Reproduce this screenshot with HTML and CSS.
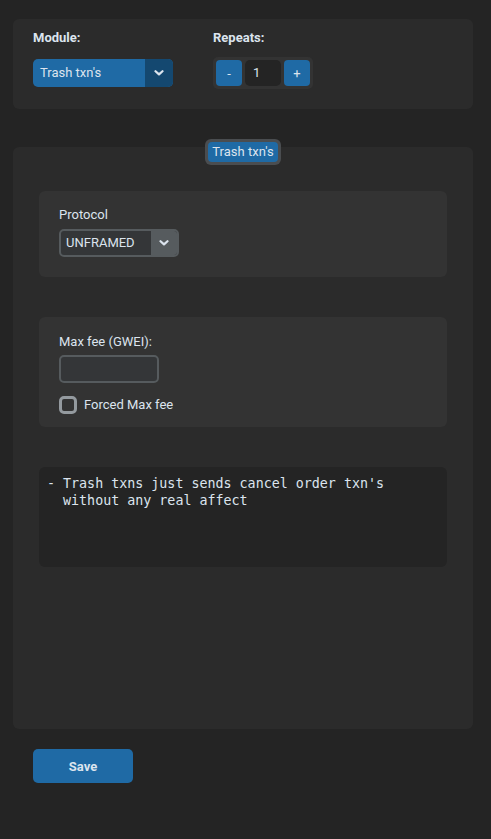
FILE: index.html
```html
<!DOCTYPE html>
<html>
<head>
<meta charset="utf-8">
<link rel="stylesheet" href="styles.css">
</head>
<body>
<div class="page">
  <section class="card top">
    <div class="field module">
      <div class="label bold">Module:</div>
      <div class="select blue">
        <span class="sel-text">Trash txn's</span>
        <span class="sel-btn"><svg width="10" height="6" viewBox="0 0 10 6"><polyline points="1.5,1.2 5,4.4 8.5,1.2" fill="none" stroke="#dce4ee" stroke-width="2.2" stroke-linecap="round" stroke-linejoin="round"/></svg></span>
      </div>
    </div>
    <div class="field">
      <div class="label bold">Repeats:</div>
      <div class="stepper">
        <button class="step">-</button>
        <div class="step-val">1</div>
        <button class="step">+</button>
      </div>
    </div>
  </section>

  <section class="card main">
    <div class="tab"><span class="tab-inner">Trash txn's</span></div>

    <div class="panel p1">
      <div class="label">Protocol</div>
      <div class="combo">
        <span class="combo-text">UNFRAMED</span>
        <span class="combo-btn"><svg width="10" height="6" viewBox="0 0 10 6"><polyline points="1.5,1.2 5,4.4 8.5,1.2" fill="none" stroke="#dce4ee" stroke-width="2.2" stroke-linecap="round" stroke-linejoin="round"/></svg></span>
      </div>
    </div>

    <div class="panel p2">
      <div class="label">Max fee (GWEI):</div>
      <div class="entry"></div>
      <label class="check"><span class="box"></span><span>Forced Max fee</span></label>
    </div>

    <pre class="textbox">- Trash txns just sends cancel order txn's
  without any real affect</pre>
  </section>

  <button class="save">Save</button>
</div>
</body>
</html>
```

FILE: styles.css
```css
* { box-sizing: border-box; }
html, body { margin: 0; padding: 0; }
body {
  background: #242424;
  color: #dce4ee;
  font-family: Roboto, "Noto Sans", sans-serif;
  font-size: 13px;
  width: 491px;
  height: 839px;
  overflow: hidden;
}
.page {
  padding: 19px 18px 0 13px;
  display: flex;
  flex-direction: column;
}
.card {
  background: #2b2b2b;
  border-radius: 6px;
}
.top {
  display: flex;
  padding: 11px 20px 20px 20px;
  height: 90px;
}
.field { display: flex; flex-direction: column; }
.module { width: 180px; }
.label { line-height: 15px; color: #dce4ee; }
.bold { font-weight: 700; }
.module .label, .top .field .label { margin-bottom: 0; }
.module .select { margin-top: 14px; }
.stepper { margin-top: 12px; }

.select {
  width: 140px;
  height: 28px;
  border-radius: 5px;
  display: flex;
  overflow: hidden;
}
.blue { background: #1f6aa5; }
.sel-text { flex: 1; padding-left: 7px; line-height: 28px; }
.sel-btn {
  width: 28px;
  background: #144870;
  display: flex; align-items: center; justify-content: center;
}

.stepper {
  width: 100px;
  height: 32px;
  background: #333333;
  border-radius: 5px;
  padding: 3px;
  display: flex;
  gap: 3px;
}
.step {
  width: 26px; height: 26px;
  border: 0; border-radius: 4px;
  background: #1f6aa5;
  color: #dce4ee;
  font-family: Roboto, sans-serif;
  font-size: 13px;
  padding: 0;
}
.step-val {
  width: 36px;
  background: #242424;
  border-radius: 5px;
  line-height: 26px;
  padding-left: 8px;
}

.main {
  margin-top: 38px;
  height: 582px;
  padding: 0 26px;
  display: flex;
  flex-direction: column;
}
.tab {
  align-self: center;
  margin-top: -8px;
  width: 76px;
  height: 26px;
  background: #4a4d50;
  border-radius: 6px;
  padding: 3px;
  display: flex;
}
.tab-inner {
  flex: 1;
  background: #1f6aa5;
  border-radius: 4px;
  line-height: 20px;
  text-align: center;
  font-size: 13px;
}
.panel {
  background: #333333;
  border-radius: 6px;
  padding-left: 20px;
  display: flex;
  flex-direction: column;
  align-items: flex-start;
}
.p1 { margin-top: 26px; height: 86px; padding-top: 16px; }
.p1 .combo { margin-top: 7px; }
.p2 { margin-top: 40px; height: 110px; padding-top: 17px; }
.combo {
  width: 120px; height: 28px;
  border: 2px solid #565b5e;
  border-radius: 5px;
  background: #343638;
  display: flex;
  overflow: hidden;
}
.combo-text { flex: 1; padding-left: 5px; line-height: 24px; }
.combo-btn {
  width: 26px; background: #565b5e;
  display: flex; align-items: center; justify-content: center;
}
.entry {
  margin-top: 6px;
  width: 100px; height: 28px;
  border: 2px solid #565b5e;
  border-radius: 5px;
  background: #343638;
}
.check {
  margin-top: 13px;
  display: flex; align-items: center; gap: 7px;
  line-height: 18px;
}
.box {
  width: 18px; height: 18px;
  border: 3px solid #949a9f;
  border-radius: 5px;
}
.textbox {
  margin: 40px 0 0 0;
  height: 100px;
  background: #242424;
  border-radius: 6px;
  padding: 8px 8px;
  font-family: "DejaVu Sans Mono", monospace;
  font-size: 13.33px;
  line-height: 17px;
  color: #dce4ee;
}
.save {
  margin: 20px 0 0 20px;
  width: 100px; height: 34px;
  border: 0; border-radius: 5px;
  background: #1f6aa5;
  color: #dce4ee;
  font-family: Roboto, sans-serif;
  font-weight: 700;
  font-size: 13px;
  padding: 0;
}
```
